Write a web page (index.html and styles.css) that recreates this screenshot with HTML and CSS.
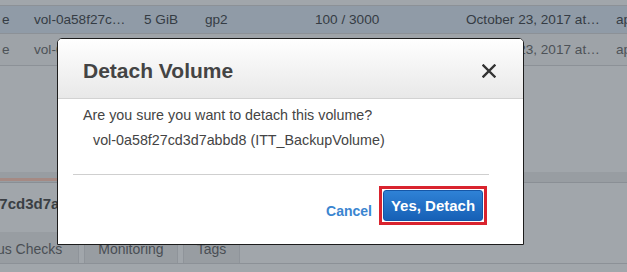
FILE: index.html
```html
<!DOCTYPE html>
<html lang="en">
<head>
  <meta charset="UTF-8" />
  <meta name="viewport" content="width=device-width, initial-scale=1.0"/>
  <title>Detach Volume</title>
  <link rel="stylesheet" href="styles.css">
</head>
<body>

  <div class="page">
    <div class="top-strip"></div>

    <div class="row selected">
      <span class="cell c1">e</span>
      <span class="cell c2">vol-0a58f27c…</span>
      <span class="cell c3">5 GiB</span>
      <span class="cell c4">gp2</span>
      <span class="cell c5">100 / 3000</span>
      <span class="cell c6">October 23, 2017 at…</span>
      <span class="cell c7">ap</span>
    </div>
    <div class="row">
      <span class="cell c1">e</span>
      <span class="cell c2">vol-0a58f27c…</span>
      <span class="cell c3">5 GiB</span>
      <span class="cell c4">gp2</span>
      <span class="cell c5">100 / 3000</span>
      <span class="cell c6">October 23, 2017 at…</span>
      <span class="cell c7">ap</span>
    </div>

    <div class="empty-area"></div>

    <div class="split-bar">
      <div class="split-mark"></div>
    </div>

    <div class="detail-title">vol-0a58f27cd3d7abbd8</div>

    <div class="tabs">
      <div class="tab first">Status Checks</div>
      <div class="tab">Monitoring</div>
      <div class="tab">Tags</div>
    </div>
  </div>

  <!-- modal -->
  <div class="modal">
    <div class="modal-header">
      <h2 class="modal-title">Detach Volume</h2>
      <svg class="close-icon" width="14" height="14" viewBox="0 0 14 14">
        <path d="M1.5 1.5 L12.5 12.5 M12.5 1.5 L1.5 12.5" stroke="#333" stroke-width="2.4" stroke-linecap="square"/>
      </svg>
    </div>
    <div class="modal-body">
      <p class="question">Are you sure you want to detach this volume?</p>
      <p class="volume-name">vol-0a58f27cd3d7abbd8 (ITT_BackupVolume)</p>
    </div>
    <hr class="modal-sep">
    <div class="modal-footer">
      <span class="cancel-link">Cancel</span>
      <div class="highlight">
        <button class="btn-detach">Yes, Detach</button>
      </div>
    </div>
  </div>

</body>
</html>
```

FILE: styles.css
```css
body {
  margin: 0;
  font-family: 'Liberation Sans', Arial, sans-serif;
  background: #a1a6ab;
  width: 627px;
  height: 272px;
  overflow: hidden;
  position: relative;
}

.page {
  height: 272px;
  color: #3b4045;
  font-size: 13.6px;
}

.top-strip {
  height: 5px;
  border-bottom: 1px solid #8c9197;
}

.row {
  display: flex;
  height: 31px;
  align-items: center;
  border-bottom: 1px solid #8c9197;
  background: #9ea3a8;
  color: #4d5257;
  white-space: nowrap;
}

.row.selected {
  height: 27px;
  background: #909ba7;
  color: #353c44;
}

.cell { flex: none; }
.c1 { width: 32px; padding-left: 2px; }
.c2 { width: 110px; }
.c3 { width: 61px; }
.c4 { width: 110px; }
.c5 { width: 151px; }
.c6 { width: 150px; }
.c7 { width: 11px; overflow: hidden; }

.empty-area {
  height: 106px;
}

.split-bar {
  height: 10px;
  background: #989da2;
  border-bottom: 1px solid #8a8f95;
  position: relative;
}

.split-mark {
  position: absolute;
  left: 0;
  bottom: 1px;
  width: 60px;
  height: 3px;
  background: #a58a84;
}

.detail-title {
  height: 40px;
  line-height: 41px;
  margin-left: -74px;
  font-weight: bold;
  font-size: 15px;
  color: #3a3f44;
  white-space: nowrap;
}

.tabs {
  display: flex;
  height: 31px;
  border-bottom: 1px solid #8c9197;
  margin-top: 9px;
}

.tab {
  height: 31px;
  line-height: 34px;
  padding: 0 13px;
  margin-right: 5px;
  background: #989da2;
  border-right: 1px solid #8f949a;
  border-left: 1px solid #8f949a;
  color: #4a4f55;
  font-size: 14px;
  white-space: nowrap;
}

.tab.first {
  margin-left: -42px;
  padding-right: 16px;
}

/* modal dialog */
.modal {
  position: absolute;
  left: 57px;
  top: 38px;
  width: 465px;
  height: 205px;
  background: #fff;
  border: 1px solid #1c1c1c;
  border-radius: 5px 5px 0 0;
  overflow: hidden;
}

.modal-header {
  display: flex;
  align-items: center;
  justify-content: space-between;
  height: 59px;
  padding: 0 27px 0 25px;
  background: linear-gradient(#ffffff, #e8e8e8);
  border-bottom: 1px solid #d2d2d2;
}

.modal-title {
  margin: 4px 0 0 0;
  font-size: 21px;
  font-weight: bold;
  color: #444;
}

.close-icon {
  margin-top: 4px;
}

.modal-body {
  padding: 7px 0 0 25px;
  font-size: 14.3px;
  color: #444;
}

.question {
  margin: 0;
  line-height: 18px;
}

.volume-name {
  margin: 7px 0 0 10px;
  line-height: 18px;
}

.modal-sep {
  margin: 25px 34px 0 15px;
  border: none;
  border-top: 1px solid #cfcfcf;
}

.modal-footer {
  display: flex;
  justify-content: flex-end;
  align-items: center;
  gap: 7px;
  padding: 11px 36px 0 0;
}

.cancel-link {
  margin-top: 11px;
  font-size: 14px;
  font-weight: bold;
  color: #3a85d0;
}

.highlight {
  border: 3px solid #d9232e;
  padding: 1px;
  display: flex;
}

.btn-detach {
  width: 100px;
  height: 31px;
  border: 1px solid #1556a6;
  border-radius: 3px;
  background: linear-gradient(#2f82d6, #1660b6);
  color: #fff;
  font-family: 'Liberation Sans', Arial, sans-serif;
  font-size: 15px;
  font-weight: bold;
  padding: 0;
}
```
